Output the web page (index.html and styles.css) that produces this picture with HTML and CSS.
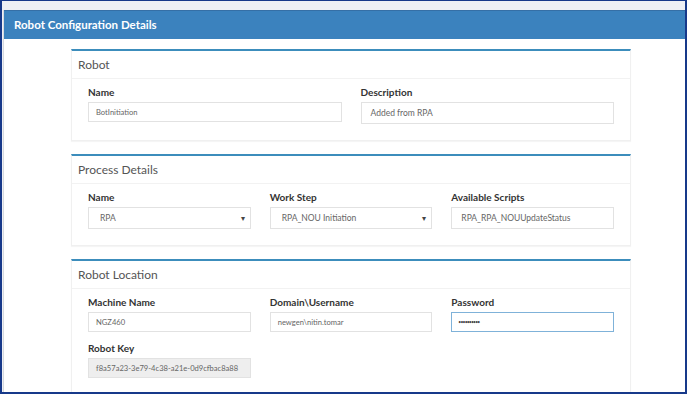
FILE: index.html
```html
<!DOCTYPE html>
<html lang="en">
<head>
  <meta charset="UTF-8" />
  <title>Robot Configuration Details</title>
  <link rel="stylesheet" href="styles.css">
</head>
<body>
<div class="frame">
  <div class="panel">
    <div class="panel-head">Robot Configuration Details</div>
    <div class="panel-body">

      <div class="box">
        <div class="box-head">Robot</div>
        <div class="box-body cols-2">
          <div class="field">
            <label>Name</label>
            <div class="input short small">BotInitiation</div>
          </div>
          <div class="field">
            <label>Description</label>
            <div class="input">Added from RPA</div>
          </div>
        </div>
      </div>

      <div class="box">
        <div class="box-head">Process Details</div>
        <div class="box-body cols-3">
          <div class="field">
            <label>Name</label>
            <div class="input select">RPA<span class="caret">&#9662;</span></div>
          </div>
          <div class="field">
            <label>Work Step</label>
            <div class="input select">RPA_NOU Initiation<span class="caret">&#9662;</span></div>
          </div>
          <div class="field">
            <label>Available Scripts</label>
            <div class="input">RPA_RPA_NOUUpdateStatus</div>
          </div>
        </div>
      </div>

      <div class="box last">
        <div class="box-head">Robot Location</div>
        <div class="box-body cols-3 loc">
          <div class="field">
            <label>Machine Name</label>
            <div class="input short small">NGZ460</div>
          </div>
          <div class="field">
            <label>Domain\Username</label>
            <div class="input short small">newgen\nitin.tomar</div>
          </div>
          <div class="field">
            <label>Password</label>
            <div class="input short focus dots">&#8226;&#8226;&#8226;&#8226;&#8226;&#8226;&#8226;&#8226;&#8226;&#8226;</div>
          </div>
          <div class="field">
            <label>Robot Key</label>
            <div class="input short small disabled">f8a57a23-3e79-4c38-a21e-0d9cfbac8a88</div>
          </div>
        </div>
      </div>

    </div>
  </div>
</div>
</body>
</html>
```

FILE: styles.css
```css
html, body { margin: 0; padding: 0; }
body { font-family: Lato, "Open Sans", sans-serif; color: #333; background: #fff; }
.frame { box-sizing: border-box; width: 687px; height: 394px; border: 2px solid #17398a; border-top-width: 1px; background: #eef0f5; padding: 9px 0 0 1px; overflow: hidden; }
.panel { background: #fff; border-left: 1px solid #d6d9de; height: 100%; }
.panel-head { background: #3b82be; border-top: 1px solid #356fa6; height: 28px; line-height: 28px; color: #fff; font-weight: bold; font-size: 11.5px; padding-left: 10px; }
.panel-body { padding: 10px 0 0 67px; width: 560px; }
.box { border: 1px solid #f0f0f0; border-top: 2px solid #3c8dbc; margin-bottom: 13px; box-shadow: 0 1px 1px rgba(0,0,0,0.04); }
.box-head { height: 27px; line-height: 27px; padding-left: 6px; font-size: 12px; color: #555; border-bottom: 1px solid #f2f2f2; }
.box-body { display: grid; column-gap: 19px; row-gap: 10px; padding: 7px 16px 16px; }
.cols-2 { grid-template-columns: 1fr 1fr; }
.cols-3 { grid-template-columns: 1fr 1fr 1fr; }
.field label { display: block; font-weight: bold; font-size: 10px; color: #333; height: 12px; line-height: 12px; margin-bottom: 4px; }
.input { position: relative; box-sizing: border-box; height: 22px; line-height: 20px; border: 1px solid #e2e2e2; padding-left: 9px; font-size: 8.5px; color: #666; background: #fff; }
.input.short { height: 20px; line-height: 18px; }
.input.small { font-size: 7.6px; padding-left: 7px; }
.input.select { padding-left: 11px; }
.caret { position: absolute; right: 5px; top: 0; font-size: 8px; color: #444; }
.input.focus { border-color: #7fb2d9; }
.input.dots { font-size: 5px; letter-spacing: -0.8px; color: #444; padding-left: 6px; }
.input.disabled { background: #eee; }
.box.last { margin-bottom: 0; }
```
